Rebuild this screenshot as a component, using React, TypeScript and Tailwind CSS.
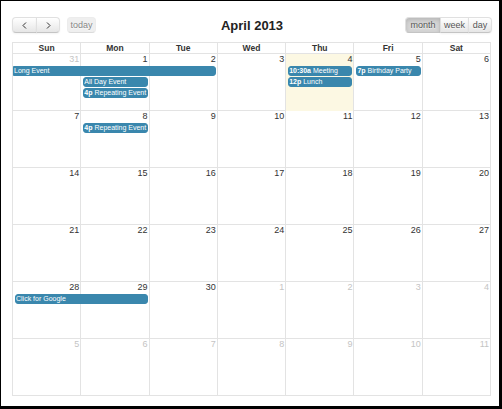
import React from 'react';

type CalEvent = {
  col: number;
  span: number;
  row: number;
  time?: string;
  title: string;
  continuesLeft?: boolean;
};

type Week = {
  days: { n: number; other?: boolean; today?: boolean }[];
  events: CalEvent[];
};

const COL_START = ['col-start-1', 'col-start-2', 'col-start-3', 'col-start-4', 'col-start-5', 'col-start-6', 'col-start-7'];
const COL_SPAN = ['col-span-1', 'col-span-2', 'col-span-3', 'col-span-4', 'col-span-5', 'col-span-6', 'col-span-7'];
const ROW_START = ['row-start-1', 'row-start-2', 'row-start-3', 'row-start-4'];

const DAY_NAMES = ['Sun', 'Mon', 'Tue', 'Wed', 'Thu', 'Fri', 'Sat'];

const range = (from: number, to: number, other = false) =>
  Array.from({ length: to - from + 1 }, (_, i) => ({ n: from + i, other }));

const WEEKS: Week[] = [
  {
    days: [{ n: 31, other: true }, { n: 1 }, { n: 2 }, { n: 3 }, { n: 4, today: true }, { n: 5 }, { n: 6 }],
    events: [
      { col: 1, span: 3, row: 2, title: 'Long Event', continuesLeft: true },
      { col: 2, span: 1, row: 3, title: 'All Day Event' },
      { col: 2, span: 1, row: 4, time: '4p', title: 'Repeating Event' },
      { col: 5, span: 1, row: 2, time: '10:30a', title: 'Meeting' },
      { col: 5, span: 1, row: 3, time: '12p', title: 'Lunch' },
      { col: 6, span: 1, row: 2, time: '7p', title: 'Birthday Party' },
    ],
  },
  {
    days: range(7, 13),
    events: [{ col: 2, span: 1, row: 2, time: '4p', title: 'Repeating Event' }],
  },
  { days: range(14, 20), events: [] },
  { days: range(21, 27), events: [] },
  {
    days: [...range(28, 30), ...range(1, 4, true)],
    events: [{ col: 1, span: 2, row: 2, title: 'Click for Google' }],
  },
  { days: range(5, 11, true), events: [] },
];

function Chevron({ dir }: { dir: 'left' | 'right' }) {
  return (
    <svg width="5" height="7" viewBox="0 0 5 7" className="block">
      <polyline
        points={dir === 'left' ? '4,0.5 1,3.5 4,6.5' : '1,0.5 4,3.5 1,6.5'}
        fill="none"
        stroke="#333"
        strokeWidth="1"
      />
    </svg>
  );
}

const btnBase =
  'flex h-[16px] items-center justify-center border border-[#e0e0e0] border-b-[#c4c4c4] text-[9px] leading-none text-[#333] [text-shadow:0_1px_1px_rgba(255,255,255,0.75)]';
const btnDefault = 'bg-linear-to-b from-white to-[#e6e6e6] shadow-[0_1px_2px_rgba(0,0,0,0.05)]';

function Toolbar() {
  return (
    <div className="grid h-[16px] w-[480px] grid-cols-[1fr_auto_1fr] items-center">
      <div className="flex items-center gap-[7px]">
        <div className="flex">
          <button className={`${btnBase} ${btnDefault} w-[25px] rounded-l-[4px]`}>
            <Chevron dir="left" />
          </button>
          <button className={`${btnBase} ${btnDefault} -ml-px w-[24px] rounded-r-[4px]`}>
            <Chevron dir="right" />
          </button>
        </div>
        <button className={`${btnBase} w-[29px] rounded-[4px] bg-[#e6e6e6] opacity-60`}>today</button>
      </div>
      <h2 className="text-[13px] font-bold leading-none text-[#222]">April 2013</h2>
      <div className="flex justify-self-end">
        <button
          className={`${btnBase} w-[36px] rounded-l-[4px] bg-[#d6d6d6] text-[#555] shadow-[inset_0_2px_4px_rgba(0,0,0,0.15)]`}
        >
          month
        </button>
        <button className={`${btnBase} ${btnDefault} -ml-px w-[29px] text-[#555]`}>week</button>
        <button className={`${btnBase} ${btnDefault} -ml-px w-[24px] rounded-r-[4px] text-[#555]`}>day</button>
      </div>
    </div>
  );
}

function EventBar({ ev }: { ev: CalEvent }) {
  return (
    <div
      className={`${COL_START[ev.col - 1]} ${COL_SPAN[ev.span - 1]} ${ROW_START[ev.row - 1]} ${
        ev.continuesLeft ? 'ml-0 rounded-r-[3px]' : 'ml-[2px] rounded-[3px]'
      } mr-[2px] h-[10px] overflow-hidden whitespace-nowrap border border-[#3a87ad] bg-[#3a87ad] text-[7px] leading-[8px] text-white`}
    >
      {ev.time && <span className="mr-[2px] font-bold">{ev.time}</span>}
      {ev.title}
    </div>
  );
}

function WeekRow({ week }: { week: Week }) {
  return (
    <div className="grid h-[57px] grid-cols-7 grid-rows-[11px_10px_10px_10px_1fr] gap-y-px border-b border-[#e3e3e3]">
      {week.days.map((d, i) => (
        <div
          key={`bg-${i}`}
          className={`${COL_START[i]} row-span-full -mb-px border-r border-[#e3e3e3] ${d.today ? 'bg-[#fcf8e3]' : ''}`}
        />
      ))}
      {week.days.map((d, i) => (
        <div
          key={`n-${i}`}
          className={`${COL_START[i]} row-start-1 pr-[2px] text-right text-[9px] leading-[11px] ${
            d.other ? 'text-[#c4c4c4]' : 'text-[#333]'
          }`}
        >
          {d.n}
        </div>
      ))}
      {week.events.map((ev, i) => (
        <EventBar key={`e-${i}`} ev={ev} />
      ))}
    </div>
  );
}

export default function App() {
  return (
    <div className="h-[409px] w-[502px] overflow-hidden border-b-[3px] border-l border-r-[3px] border-t border-black bg-white font-['Liberation_Sans',Arial,sans-serif]">
      <div className="ml-[11px] mt-[16px]">
        <Toolbar />
        <div className="mt-[9px] w-[479px] border-l border-t border-[#e3e3e3]">
          <div className="grid grid-cols-7">
            {DAY_NAMES.map((name) => (
              <div
                key={name}
                className="h-[11px] border-b border-r border-[#e3e3e3] text-center text-[8.5px] font-bold leading-[10px] text-[#333]"
              >
                {name}
              </div>
            ))}
          </div>
          {WEEKS.map((week, i) => (
            <WeekRow key={i} week={week} />
          ))}
        </div>
      </div>
    </div>
  );
}
